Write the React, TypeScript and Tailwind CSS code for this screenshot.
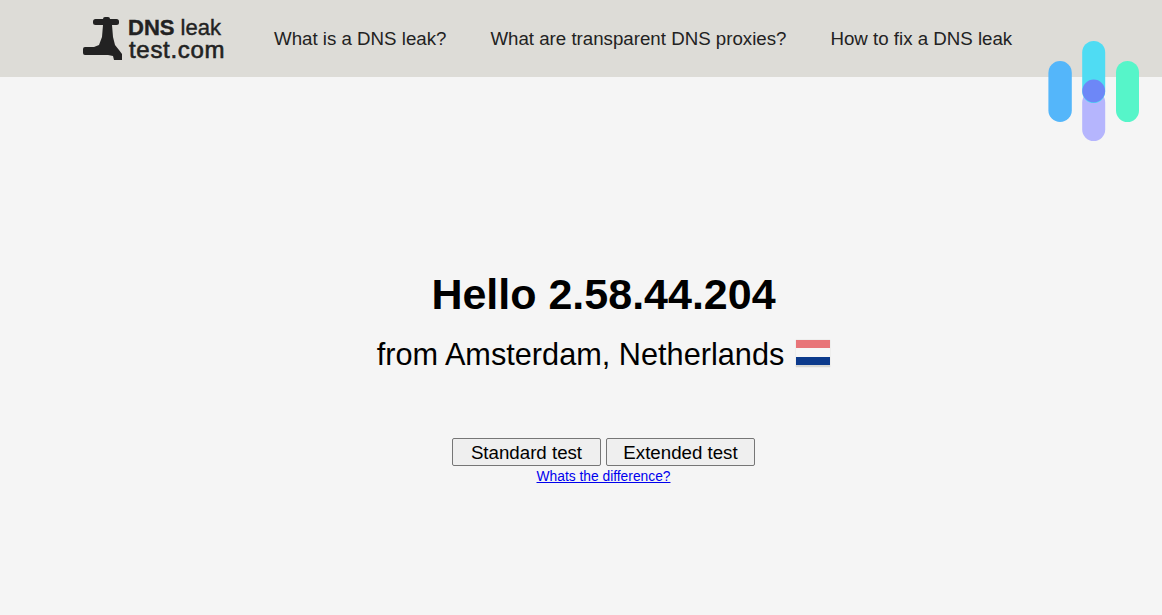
const SANS = "font-['Liberation_Sans',Arial,sans-serif]";

function Faucet() {
  return (
    <svg width="42" height="44" viewBox="0 0 42 44" className="shrink-0" aria-hidden="true">
      <g fill="#222222">
        <rect x="11" y="2" width="26" height="6" rx="2.5" />
        <rect x="21" y="0" width="7" height="9" rx="2" />
        <path d="M21 8H30L31 20L33 28L37 33L40 37V43H32L31 39L26 38H3a2 2 0 0 1-2-2V32a2 2 0 0 1 2-2H12L17 28L20 20Z" />
      </g>
    </svg>
  );
}

function NavLink({ children }: { children: string }) {
  return (
    <a href="#" className="pt-[2px] text-[18.7px] leading-none text-[#222222]">
      {children}
    </a>
  );
}

function OverlayLogo() {
  return (
    <svg
      width="92"
      height="100"
      viewBox="0 0 92 100"
      className="absolute left-[1048px] top-[41px]"
      aria-hidden="true"
    >
      <rect x="0.4" y="20" width="23.4" height="61" rx="11.7" fill="#54b6fa" />
      <rect x="34.2" y="50" width="23" height="50" rx="11.5" fill="#b5b5fd" />
      <rect x="34.2" y="0" width="23" height="62" rx="11.5" fill="#4fdcf3" />
      <rect x="68" y="20" width="23" height="61" rx="11.5" fill="#56f5c9" />
      <circle cx="45.7" cy="50" r="11.4" fill="#6d87f7" />
    </svg>
  );
}

export default function App() {
  return (
    <div className={`${SANS} relative min-h-[615px] overflow-hidden bg-[#f5f5f5] text-black`}>
      <header className="flex h-[77px] items-center bg-[#dddcd7] pl-[82px]">
        <a href="#" className="flex w-[192px] items-center gap-[4px]">
          <Faucet />
          <span className="flex flex-col leading-[22px] text-[#222222]">
            <span className="text-[22px]">
              <b className="[-webkit-text-stroke:0.4px_#222222]">DNS</b>{" "}
              <span className="[-webkit-text-stroke:0.4px_#222222]">leak</span>
            </span>
            <span className="pl-px text-[24px] tracking-[0.7px] [-webkit-text-stroke:0.6px_#222222]">
              test.com
            </span>
          </span>
        </a>
        <nav className="flex gap-[44px]">
          <NavLink>What is a DNS leak?</NavLink>
          <NavLink>What are transparent DNS proxies?</NavLink>
          <NavLink>How to fix a DNS leak</NavLink>
        </nav>
      </header>

      <main className="flex flex-col items-center pl-[45px] pt-[192px]">
        <h1 className="text-[43px] font-bold leading-[50px]">Hello 2.58.44.204</h1>
        <p className="mt-[16px] flex items-center text-[30.7px] leading-[40px]">
          from Amsterdam, Netherlands
          <span className="mb-[3px] ml-[12px] flex h-[27px] w-[34px] flex-col overflow-hidden border-b-2 border-[#d8d8d4] shadow-[0_0_1px_#cfcfcb]">
            <span className="h-[8px] bg-[#e87478]" />
            <span className="h-[9px] bg-[#f6f6f6]" />
            <span className="h-[8px] bg-[#0c3a8c]" />
          </span>
        </p>
        <div className="mt-[63px] flex gap-[5px]">
          <button className="h-[28px] w-[149px] rounded-[2px] border border-[#767676] bg-[#efefef] pb-[2px] text-[18.7px] text-black">
            Standard test
          </button>
          <button className="h-[28px] w-[149px] rounded-[2px] border border-[#767676] bg-[#efefef] pb-[2px] text-[18.7px] text-black">
            Extended test
          </button>
        </div>
        <a href="#" className="mt-[3px] text-[13.8px] leading-[16px] text-[#0000ee] underline">
          Whats the difference?
        </a>
      </main>

      <OverlayLogo />
    </div>
  );
}
